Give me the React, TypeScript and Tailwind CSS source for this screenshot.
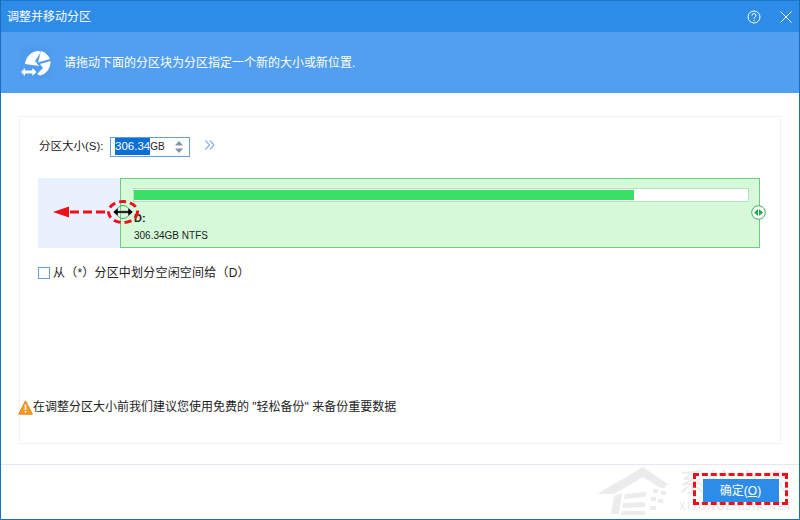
const cjk = "font-['Liberation_Sans','Noto_Sans_CJK_SC',sans-serif]";

function PieIcon() {
  return (
    <svg width="32" height="32" viewBox="0 0 32 32" className="shrink-0">
      <rect width="32" height="32" fill="#4f9bee" />
      <path d="M5 17 A14 14 0 0 1 18.5 4 L21 5 L15 14 L19 19 Z" fill="#fff" />
      <path d="M21 4 A14 14 0 0 1 30 12 L18 15.5 Z" fill="#fff" />
      <path d="M30.5 14 A14 14 0 0 1 20 28.5 L17 27 L23 21 L20 17 Z" fill="#fff" />
      <path d="M0.5 25 L5.5 20 V23 H12 V20 L17 25 L12 30 V27 H5.5 V30 Z" fill="#fff" stroke="#4f9bee" strokeWidth="1" />
    </svg>
  );
}

function HandleIcon() {
  return (
    <svg width="15" height="15" viewBox="0 0 15 15">
      <circle cx="7.5" cy="7.5" r="6.8" fill="#fff" stroke="#34b356" strokeWidth="1" />
      <path d="M7 4 V11 L3 7.5 Z M8 4 V11 L12 7.5 Z" fill="#1fae4b" />
    </svg>
  );
}

function WarnIcon() {
  return (
    <svg width="15" height="15" viewBox="0 0 15 15" className="shrink-0">
      <path d="M7.5 0.8 L14.4 14.2 H0.6 Z" fill="#f59a23" stroke="#e98a17" strokeWidth="1" strokeLinejoin="round" />
      <rect x="6.7" y="4.5" width="1.6" height="5.5" fill="#fff" />
      <rect x="6.7" y="11" width="1.6" height="1.6" fill="#fff" />
    </svg>
  );
}

function DragAnnotation() {
  return (
    <svg width="96" height="46" viewBox="0 0 96 46" className="absolute left-[46px] top-[191px]">
      <path d="M6 21 L22 15.5 V26.5 Z" fill="#ee0f1a" />
      <path d="M23 21 H61" stroke="#ee0f1a" strokeWidth="3" strokeDasharray="9 4" />
      <ellipse cx="76" cy="21" rx="14.5" ry="10.5" fill="none" stroke="#ee0f1a" strokeWidth="3" strokeDasharray="7 4" />
      <circle cx="76" cy="21" r="6.5" fill="none" stroke="#34b356" strokeWidth="1" />
      <path d="M66 21 L71 16.5 V19.8 H81 V16.5 L86 21 L81 25.5 V22.2 H71 V25.5 Z" fill="#000" stroke="#fff" strokeWidth="0.5" />
    </svg>
  );
}

function Watermark() {
  return (
    <div className="absolute left-[594px] top-[466px] flex h-[52px] w-[204px] pointer-events-none">
      <svg width="84" height="50" viewBox="0 0 84 50" className="shrink-0">
        <path d="M2 28 L48 1 L74 19 L64 21 L48 11 L19 28 Z" fill="#ececec" />
        <path d="M19 30 L27 27 L24 48 L16 48 Z" fill="#ececec" />
        <path d="M30 28 L51 26 V31 L29 33 Z M28 37 L50 36 V41 L27 42 Z M27 45 L50 45 V49 L26 49 Z" fill="#ececec" />
        <path d="M65 18 h5 v4 h-5 z M58 23 h5 v4 h-5 z M66 25 h5 v4 h-5 z M56 31 h5 v4 h-5 z M63 33 h5 v4 h-5 z M55 40 h6 v4 h-6 z" fill="#ececec" />
      </svg>
      <div className="flex flex-col">
        <span className="h-[35px] whitespace-nowrap text-[26px] leading-[35px] tracking-[2px] text-[#ececec]">系统之家</span>
        <span className="whitespace-nowrap text-[10px] leading-[12px] tracking-[1.4px] text-[#e4e4e4] font-['Liberation_Sans',sans-serif]">XITONGZHIJIA.NET</span>
      </div>
    </div>
  );
}

export default function App() {
  return (
    <div className={`relative flex h-[520px] w-[800px] flex-col overflow-hidden border-x border-b border-x-[#1a6fb8] border-b-[#1a6fb8] bg-white text-[12px] text-[#222] ${cjk}`}>
      <header className="flex h-[32px] shrink-0 items-center justify-between border-t border-[#1c77c9] bg-[#2d8ce8] pl-[6px] pr-[7px] text-white">
        <span className="text-[12px]">调整并移动分区</span>
        <div className="flex items-center gap-[19px]">
          <svg width="14" height="14" viewBox="0 0 14 14">
            <circle cx="7" cy="7" r="6" fill="none" stroke="#fff" strokeWidth="1" />
            <path d="M5 5.5 A2 2 0 1 1 7.6 7.4 C7.1 7.6 7 8 7 8.8" fill="none" stroke="#fff" strokeWidth="1" />
            <rect x="6.5" y="9.8" width="1" height="1.2" fill="#fff" />
          </svg>
          <svg width="12" height="12" viewBox="0 0 12 12">
            <path d="M0.5 0.5 L11.5 11.5 M11.5 0.5 L0.5 11.5" stroke="#fff" strokeWidth="1" />
          </svg>
        </div>
      </header>

      <div className="flex h-[61px] shrink-0 items-center gap-[12px] bg-[#529ff2] pl-[19px] text-white">
        <PieIcon />
        <span>请拖动下面的分区块为分区指定一个新的大小或新位置.</span>
      </div>

      <main className="mx-[18px] mt-[23px] flex h-[328px] shrink-0 flex-col border border-[#eef2f8] pl-[18px] pr-[20px]">
        <div className="mt-[19px] flex h-[21px] items-center">
          <span className="w-[72px] pl-[1px] text-[11.5px]">分区大小(S):</span>
          <div className="flex h-[20px] w-[80px] items-center border border-[#6a9bdc] pl-[4px]">
            <span className="bg-[#0a6fd6] text-[11.5px] text-white">306.34</span>
            <span className="text-[10px]">GB</span>
            <svg width="10" height="16" viewBox="0 0 10 16" className="ml-auto mr-[5px]">
              <path d="M5 2 L9 6.5 H1 Z" fill="#7f93ad" />
              <path d="M5 14 L9 9.5 H1 Z" fill="#7f93ad" />
            </svg>
          </div>
          <svg width="12" height="12" viewBox="0 0 12 12" className="ml-[14px] mb-[3px]">
            <path d="M1.5 1.5 L5.5 6 L1.5 10.5 M6 1.5 L10 6 L6 10.5" fill="none" stroke="#8fb0da" strokeWidth="1.2" />
          </svg>
        </div>

        <div className="mt-[21px] flex h-[70px] w-[722px]">
          <div className="h-full w-[82px] bg-[#e9f1fd]" />
          <div className="relative h-full flex-1 border border-[#6ecb7f] bg-[#d6fad9] pl-[12px] pr-[10px] pt-[9px]">
            <div className="h-[14px] border border-[#b5e3bd] bg-white py-[1px]">
              <div className="h-full w-[81.4%] bg-[#3bdf65]" />
            </div>
            <div className="mt-[9px] pl-[1px] text-[11px] font-bold leading-[14px]">D:</div>
            <div className="mt-[4px] pl-[1px] text-[10px] leading-[14px]">306.34GB NTFS</div>
            <div className="absolute right-[-7px] top-[26px]">
              <HandleIcon />
            </div>
          </div>
        </div>

        <label className="mt-[18px] flex h-[14px] items-center gap-[3px]">
          <span className="h-[12px] w-[12px] border border-[#6a9bdc] bg-white" />
          <span className="tracking-[0.2px]">从（*）分区中划分空闲空间给（D）</span>
        </label>

        <div className="mt-auto mb-[28px] ml-[-20px] flex h-[16px] items-center">
          <WarnIcon />
          <span className="whitespace-nowrap">在调整分区大小前我们建议您使用免费的 "轻松备份" 来备份重要数据</span>
        </div>
      </main>

      <div className="mt-[20px] flex-1 border-t border-[#e2e9f2]" />

      <Watermark />
      <DragAnnotation />

      <div className="absolute left-[692px] top-[473px] flex h-[32px] w-[95px] items-start justify-center border-[3px] border-dashed border-[#ee0f1a] pt-[3px]">
        <button className="h-[23px] w-[76px] bg-[#2d8ce8] text-[12px] text-white">
          确定(<span className="underline">O</span>)
        </button>
      </div>
    </div>
  );
}
